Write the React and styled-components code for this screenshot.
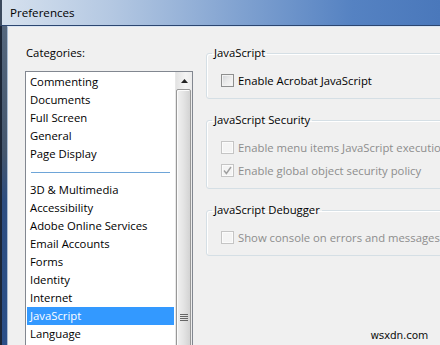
import React from 'react';
import styled, { createGlobalStyle } from 'styled-components';

const GlobalStyle = createGlobalStyle`
  html, body {
    margin: 0;
    padding: 0;
    background: #f0f0f0;
  }
  * {
    box-sizing: border-box;
  }
`;

const uiFont = `"Open Sans", "Noto Sans", sans-serif`;

const Window = styled.div`
  position: relative;
  width: 440px;
  height: 345px;
  overflow: hidden;
  display: flex;
  flex-direction: column;
  font-family: ${uiFont};
  font-size: 11.3px;
  color: #000;
`;

const TitleBar = styled.div`
  flex: 0 0 26px;
  display: flex;
  align-items: center;
  padding-left: 8px;
  padding-bottom: 1px;
  font-size: 11.6px;
  background: linear-gradient(to right, #d6e1ee 0%, #b4c8e2 25%, #7fa1d0 55%, #5582c2 80%, #4a78bb 100%);
  border-bottom: 1px solid #2c4670;
  border-left: 2px solid #3b4a5e;
`;

const Body = styled.div`
  flex: 1;
  display: flex;
  min-height: 0;
`;

const Frame = styled.div`
  flex: 0 0 7px;
  background: linear-gradient(to bottom, #55677d 0%, #44566d 40%, #2d4d80 55%, #2a4f88 100%);
  border-left: 2px solid #1c2636;
`;

const Client = styled.div`
  flex: 1;
  display: flex;
  gap: 13px;
  padding: 18px 0 0 17px;
  background: #f0f0f0;
  border-left: 1px solid #a9bbd1;
  border-top: 1px solid #dbe6f3;
`;

const LeftColumn = styled.div`
  display: flex;
  flex-direction: column;
  flex: 0 0 168px;
`;

const Label = styled.div`
  line-height: 15px;
  padding-left: 1px;
  margin-bottom: 11px;
`;

const ListBox = styled.div`
  display: flex;
  height: 330px;
  border: 1px solid #828790;
  background: #fff;
`;

const Items = styled.div`
  flex: 1;
  padding: 1px;
`;

const Item = styled.div`
  height: 18px;
  line-height: 18px;
  padding-left: 3px;
  white-space: nowrap;
  background: ${(p) => (p.$selected ? '#3399ff' : 'transparent')};
  color: ${(p) => (p.$selected ? '#fff' : '#000')};
`;

const Separator = styled.div`
  height: 18px;
  display: flex;
  align-items: center;
  padding: 0 4px;
  &::after {
    content: '';
    flex: 1;
    height: 1px;
    margin-top: 1px;
    background: #6ea5d8;
  }
`;

const ScrollBar = styled.div`
  flex: 0 0 17px;
  display: flex;
  flex-direction: column;
  background: linear-gradient(to right, #e3e3e3, #f4f4f4 60%, #ececec);
  border-left: 1px solid #e8e8e8;
`;

const ArrowButton = styled.div`
  flex: 0 0 17px;
  display: flex;
  align-items: center;
  justify-content: center;
  padding-top: 1px;
`;

const Thumb = styled.div`
  flex: 0 0 456px;
  margin: 0 1px 0 0;
  border: 1px solid #989898;
  border-radius: 2px;
  background: linear-gradient(to right, #f1f1f1, #e4e4e4 50%, #d3d3d3);
  box-shadow: inset 1px 1px 0 #fbfbfb;
  display: flex;
  align-items: center;
  justify-content: center;
`;

const RightColumn = styled.div`
  flex: 1;
  display: flex;
  flex-direction: column;
  gap: 13px;
  margin-right: -60px;
`;

const Group = styled.fieldset`
  margin: 0;
  padding: 8px 0 7px 5px;
  border: 1px solid #d5dfe5;
  border-radius: 3px;
  box-shadow: inset 1px 1px 0 #fff;
  min-width: 0;
`;

const Legend = styled.legend`
  padding: 0 2px;
  line-height: 16px;
  color: #000;
`;

const CheckRow = styled.div`
  height: 22px;
  display: flex;
  align-items: center;
  gap: 4px;
  margin-left: 9px;
  white-space: nowrap;
  color: ${(p) => (p.$disabled ? '#8d8d8d' : '#000')};
  & + & {
    margin-top: 1px;
  }
`;

const Box = styled.span`
  flex: 0 0 13px;
  width: 13px;
  height: 13px;
  display: flex;
  align-items: center;
  justify-content: center;
  border: 1px solid ${(p) => (p.$disabled ? '#c5c5c5' : '#8e8f8f')};
  background: ${(p) =>
    p.$disabled
      ? '#f4f4f4'
      : 'linear-gradient(135deg, #d0d3d7 0%, #ebebeb 50%, #f8f8f8 100%)'};
  box-shadow: inset 0 0 0 1px ${(p) => (p.$disabled ? '#fbfbfb' : '#f2f2f2')};
`;

const Watermark = styled.div`
  position: absolute;
  right: 12px;
  bottom: 4px;
  font-family: "DejaVu Sans", Verdana, sans-serif;
  font-size: 10.5px;
  color: #111;
  letter-spacing: -0.2px;
`;

const Checkbox = ({ label, checked, disabled }) => (
  <CheckRow $disabled={disabled}>
    <Box $disabled={disabled}>
      {checked && (
        <svg width="9" height="9" viewBox="0 0 9 9">
          <path d="M1 4.5 L3.4 7.5 L8 1" fill="none" stroke="#a0a0a0" strokeWidth="1.4" />
        </svg>
      )}
    </Box>
    {label}
  </CheckRow>
);

const topItems = ['Commenting', 'Documents', 'Full Screen', 'General', 'Page Display'];
const otherItems = [
  '3D & Multimedia',
  'Accessibility',
  'Adobe Online Services',
  'Email Accounts',
  'Forms',
  'Identity',
  'Internet',
  'JavaScript',
  'Language',
  'Measuring (2D)',
];

export default function App() {
  return (
    <>
      <GlobalStyle />
      <Window>
        <TitleBar>Preferences</TitleBar>
        <Body>
          <Frame />
          <Client>
            <LeftColumn>
              <Label>Categories:</Label>
              <ListBox>
                <Items>
                  {topItems.map((name) => (
                    <Item key={name}>{name}</Item>
                  ))}
                  <Separator />
                  {otherItems.map((name) => (
                    <Item key={name} $selected={name === 'JavaScript'}>
                      {name}
                    </Item>
                  ))}
                </Items>
                <ScrollBar>
                  <ArrowButton>
                    <svg width="7" height="4" viewBox="0 0 7 4">
                      <path d="M3.5 0 L7 4 L0 4 Z" fill="#222" />
                    </svg>
                  </ArrowButton>
                  <Thumb>
                    <svg width="8" height="7" viewBox="0 0 8 7">
                      <path d="M0 0.5 H8 M0 2.5 H8 M0 4.5 H8 M0 6.5 H8" stroke="#666" strokeWidth="1" />
                    </svg>
                  </Thumb>
                </ScrollBar>
              </ListBox>
            </LeftColumn>
            <RightColumn>
              <Group>
                <Legend>JavaScript</Legend>
                <Checkbox label="Enable Acrobat JavaScript" />
              </Group>
              <Group>
                <Legend>JavaScript Security</Legend>
                <Checkbox label="Enable menu items JavaScript execution privileges" disabled />
                <Checkbox label="Enable global object security policy" checked disabled />
              </Group>
              <Group>
                <Legend>JavaScript Debugger</Legend>
                <Checkbox label="Show console on errors and messages" disabled />
              </Group>
            </RightColumn>
          </Client>
        </Body>
        <Watermark>wsxdn.com</Watermark>
      </Window>
    </>
  );
}
